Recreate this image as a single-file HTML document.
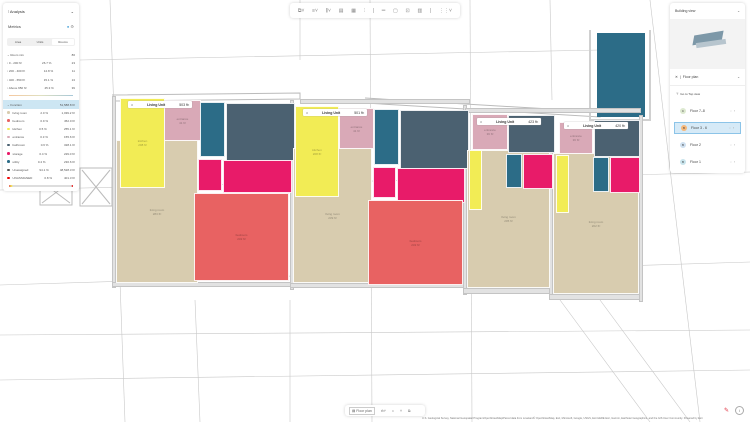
<!DOCTYPE html>
<html><head><meta charset="utf-8"><style>
*{margin:0;padding:0;box-sizing:border-box}
body{width:750px;height:422px;overflow:hidden;background:#fff;font-family:"Liberation Sans",sans-serif;position:relative;color:#333}
.a{position:absolute}
.r{position:absolute;font-size:3px;color:rgba(0,0,0,.35);display:flex;flex-direction:column;align-items:center;justify-content:center;text-align:center;border:0.7px solid rgba(255,255,255,.9)}
.y{background:#f2ec55}.p{background:#d9a9b7}.b{background:#d8ccaf}.t{background:#2c6c87}.s{background:#4b6171}.m{background:#e81b69}.rd{background:#e86262}
.w{position:absolute;background:#e2e2e2;border:0.5px solid #c4c4c4}
.lab{position:absolute;background:#fff;font-size:3.5px;height:7px;display:flex;align-items:center;padding:0 3px;gap:14px;border-radius:1px;box-shadow:0 0 1px #999}
.panel{position:absolute;background:#fff;border-radius:3px;box-shadow:0 0 3px rgba(0,0,0,.18)}
.row{display:flex;justify-content:space-between;font-size:3px;color:#555;height:8.2px;align-items:center;padding:0 4px}
.dot{display:inline-block;width:2.5px;height:2.5px;border-radius:50%;margin-right:3px}
.fl{display:flex;align-items:center;font-size:3.5px;height:12px;padding:0 6px;color:#444;margin:0 4px}
.c{display:inline-block;width:6px;height:6px;border-radius:50%;margin-right:4px;font-size:3px;text-align:center;line-height:6px}
</style></head><body>
<svg class="a" style="left:0;top:0" width="750" height="422">
<g stroke="#c8c8c8" stroke-width="0.6" fill="none">
<line x1="0" y1="190" x2="750" y2="172"/><line x1="0" y1="285" x2="750" y2="262"/>
<line x1="110" y1="0" x2="125" y2="422"/><line x1="370" y1="0" x2="372" y2="422"/><line x1="470" y1="0" x2="472" y2="422"/>
<line x1="300" y1="0" x2="300" y2="60"/><line x1="550" y1="0" x2="552" y2="100"/><line x1="650" y1="0" x2="700" y2="422"/>
<line x1="0" y1="335" x2="750" y2="330"/><line x1="560" y1="300" x2="650" y2="422"/><line x1="600" y1="300" x2="690" y2="422"/>
<line x1="80" y1="60" x2="600" y2="50"/><line x1="195" y1="300" x2="200" y2="422"/><line x1="290" y1="300" x2="290" y2="422"/>
<line x1="0" y1="380" x2="750" y2="370"/>
</g>
<g stroke="#bbb" stroke-width="1" fill="none">
<rect x="80" y="168" width="32" height="38"/><line x1="82" y1="170" x2="110" y2="204"/><line x1="110" y1="170" x2="82" y2="204"/>
<rect x="40" y="180" width="32" height="25"/><line x1="42" y1="182" x2="70" y2="203"/><line x1="70" y1="182" x2="42" y2="203"/>
<polyline points="112,95 300,93 300,99 112,101"/><polyline points="365,98 600,112 600,117 365,103"/>
</g>
<polygon points="597,33 645,33 645,117 597,117" fill="#2c6c87"/>
<polyline points="590,30 590,120 650,120 650,30" stroke="#d0d0d0" stroke-width="2" fill="none"/>
</svg>
<div class="w" style="left:112px;top:96px;width:4px;height:192px"></div>
<div class="w" style="left:112px;top:282px;width:180px;height:5px"></div>
<div class="w" style="left:290px;top:100px;width:4px;height:190px"></div>
<div class="w" style="left:290px;top:283px;width:176px;height:5px"></div>
<div class="w" style="left:463px;top:105px;width:4px;height:190px"></div>
<div class="w" style="left:463px;top:288px;width:90px;height:6px"></div>
<div class="w" style="left:549px;top:115px;width:4px;height:182px"></div>
<div class="w" style="left:549px;top:294px;width:93px;height:6px"></div>
<div class="w" style="left:639px;top:115px;width:4px;height:187px"></div>
<div class="w" style="left:300px;top:99px;width:170px;height:5px"></div>
<div class="w" style="left:465px;top:108px;width:176px;height:5px"></div>

<div class="r b" style="left:116px;top:140px;width:82px;height:143px">living room<br>283 ft²</div>
<div class="r y" style="left:120px;top:98px;width:45px;height:90px">kitchen<br>208 ft²</div>
<div class="r p" style="left:164px;top:100px;width:37px;height:41px">entrance<br>41 ft²</div>
<div class="r t" style="left:200px;top:102px;width:25px;height:55px"></div>
<div class="r s" style="left:226px;top:103px;width:69px;height:58px"></div>
<div class="r m" style="left:198px;top:159px;width:24px;height:32px"></div>
<div class="r m" style="left:223px;top:160px;width:69px;height:33px"></div>
<div class="r rd" style="left:194px;top:193px;width:95px;height:88px">bedroom<br>232 ft²</div>

<div class="r b" style="left:293px;top:148px;width:79px;height:135px">living room<br>239 ft²</div>
<div class="r y" style="left:295px;top:106px;width:44px;height:91px">kitchen<br>208 ft²</div>
<div class="r p" style="left:339px;top:108px;width:35px;height:41px">entrance<br>41 ft²</div>
<div class="r t" style="left:374px;top:109px;width:25px;height:56px"></div>
<div class="r s" style="left:400px;top:110px;width:69px;height:59px"></div>
<div class="r m" style="left:373px;top:167px;width:23px;height:31px"></div>
<div class="r m" style="left:397px;top:168px;width:68px;height:35px"></div>
<div class="r rd" style="left:368px;top:200px;width:95px;height:85px">bedroom<br>232 ft²</div>

<div class="r b" style="left:467px;top:150px;width:83px;height:138px">living room<br>205 ft²</div>
<div class="r y" style="left:469px;top:150px;width:13px;height:60px"></div>
<div class="r p" style="left:472px;top:114px;width:36px;height:36px">entrance<br>36 ft²</div>
<div class="r s" style="left:508px;top:115px;width:47px;height:38px"></div>
<div class="r t" style="left:506px;top:154px;width:16px;height:34px"></div>
<div class="r m" style="left:523px;top:154px;width:30px;height:35px"></div>

<div class="r b" style="left:553px;top:153px;width:86px;height:141px">living room<br>202 ft²</div>
<div class="r y" style="left:556px;top:155px;width:13px;height:58px"></div>
<div class="r p" style="left:559px;top:122px;width:34px;height:32px">entrance<br>36 ft²</div>
<div class="r s" style="left:594px;top:120px;width:46px;height:37px"></div>
<div class="r t" style="left:593px;top:157px;width:16px;height:35px"></div>
<div class="r m" style="left:610px;top:157px;width:30px;height:36px"></div>

<div class="lab" style="left:128px;top:101px">⌂ <b>Living Unit</b><span>503 ft²</span></div>
<div class="lab" style="left:303px;top:109px">⌂ <b>Living Unit</b><span>501 ft²</span></div>
<div class="lab" style="left:477px;top:118px">⌂ <b>Living Unit</b><span>423 ft²</span></div>
<div class="lab" style="left:564px;top:122px">⌂ <b>Living Unit</b><span>420 ft²</span></div>

<div class="panel" style="left:3px;top:3px;width:76px;height:188px">
<div style="font-size:4px;padding:6px 5px;display:flex;justify-content:space-between"><span>⫶ Analysis</span><span>⌄</span></div>
<div style="font-size:4px;padding:4px 5px;display:flex;justify-content:space-between;color:#444"><span>Metrics</span><span style="color:#4aa3d8">● <span style="color:#888">⚙</span></span></div>
<div style="margin:5px 4px;height:8px;background:#f0f0f0;border-radius:2px;display:flex;font-size:3px;align-items:center;color:#555"><span style="flex:1;text-align:center">Area</span><span style="flex:1;text-align:center">Units</span><span style="flex:1;text-align:center;background:#fff;margin:1px;border-radius:1px;line-height:6px">Rooms</span></div>
<div class="row"><span>⌄ Room mix</span><span>86</span></div>
<div class="row"><span>▫ 0 - 200 ft²</span><span>26.7 %</span><span>23</span></div>
<div class="row"><span>▫ 200 - 400 ft²</span><span>12.8 %</span><span>11</span></div>
<div class="row"><span>▫ 400 - 650 ft²</span><span>15.1 %</span><span>13</span></div>
<div class="row"><span>▫ Above 650 ft²</span><span>45.3 %</span><span>39</span></div>
<div style="height:1.5px;margin:3px 6px;background:linear-gradient(90deg,#f5c8a0,#e0e0c0,#a8c8d8)"></div>
<div class="row" style="background:#cde6f3;margin-top:4px"><span>⌄ Function</span><span>51,588.8 ft²</span></div>
<div class="row"><span><i class="dot" style="background:#d8ccaf"></i>living room</span><span>2.0 %</span><span>1,039.2 ft²</span></div>
<div class="row"><span><i class="dot" style="background:#e86262"></i>bedroom</span><span>0.9 %</span><span>452.0 ft²</span></div>
<div class="row"><span><i class="dot" style="background:#f2ec55"></i>kitchen</span><span>0.5 %</span><span>255.1 ft²</span></div>
<div class="row"><span><i class="dot" style="background:#d9a9b7"></i>entrance</span><span>0.3 %</span><span>155.6 ft²</span></div>
<div class="row"><span><i class="dot" style="background:#4b6171"></i>bathroom</span><span>0.6 %</span><span>328.1 ft²</span></div>
<div class="row"><span><i class="dot" style="background:#e81b69"></i>storage</span><span>0.4 %</span><span>229.0 ft²</span></div>
<div class="row"><span><i class="dot" style="background:#2c6c87"></i>utility</span><span>0.4 %</span><span>230.6 ft²</span></div>
<div class="row"><span><i class="dot" style="background:#555"></i>Unassigned</span><span>94.1 %</span><span>48,528.3 ft²</span></div>
<div class="row"><span><i class="dot" style="background:#e00"></i>UNASSIGNED</span><span>0.8 %</span><span>401.3 ft²</span></div>
<div style="height:1.5px;margin:3px 6px;background:linear-gradient(90deg,#e86262 0,#f2ec55 4%,#ddd 6%,#ddd 97%,#e00 100%)"></div>
</div>

<div class="panel" style="left:290px;top:3px;width:170px;height:15px;font-size:5px;color:#888;display:flex;align-items:center;justify-content:space-around;padding:0 4px">
<span>⧉˅</span><span>≡˅</span><span>⫼˅</span><span>▤</span><span>▦</span><span>⫶</span><span>|</span><span>═</span><span>▢</span><span>⊡</span><span>▥</span><span>|</span><span>⋮⋮˅</span></div>

<div class="panel" style="left:670px;top:3px;width:75px;height:170px">
<div style="font-size:3.5px;padding:6px 5px;display:flex;justify-content:space-between;color:#444"><span>Building view</span><span>⌄</span></div>
<div style="height:50px;background:#f3f3f3;position:relative">
<div class="a" style="left:24px;top:14px;width:28px;height:10px;background:#7d98a8;transform:skewX(-20deg) rotate(-10deg)"></div>
<div class="a" style="left:26px;top:22px;width:30px;height:5px;background:#b7c5ce;transform:rotate(-8deg)"></div>
</div>
<div style="font-size:3.5px;padding:6px 5px;display:flex;justify-content:space-between;color:#444;border-bottom:1px solid #eee"><span>✕ &nbsp;|&nbsp; Floor plan</span><span>⌄</span></div>
<div style="font-size:3px;padding:6px 6px;color:#444">⊤ &nbsp;Go to Top view</div>
<div class="fl" style="margin-top:3px"><span class="c" style="background:#dde9d0">C</span>Floor 7–8<span style="margin-left:auto;color:#999">◌ &nbsp;›</span></div>
<div class="fl" style="margin-top:5px;background:#d6eaf7;border:0.7px solid #8cc4e8"><span class="c" style="background:#f6b87a">B</span>Floor 3 - 6<span style="margin-left:auto;color:#999">◌ &nbsp;›</span></div>
<div class="fl" style="margin-top:5px"><span class="c" style="background:#cfe0f0">B</span>Floor 2<span style="margin-left:auto;color:#999">◌ &nbsp;›</span></div>
<div class="fl" style="margin-top:5px"><span class="c" style="background:#c8e4ec">B</span>Floor 1<span style="margin-left:auto;color:#999">◌ &nbsp;›</span></div>
</div>

<div class="panel" style="left:345px;top:405px;width:80px;height:11px;font-size:3.5px;color:#666;display:flex;align-items:center;gap:6px;padding:0 4px"><span style="border:0.6px solid #ccc;padding:1px 2px">▤ Floor plan</span><span>⊖˅</span><span>⌂</span><span>˅</span><span>⧉</span></div>
<div class="a" style="left:724px;top:407px;font-size:6px;color:#e03040">✎</div>
<div class="a" style="left:735px;top:406px;width:9px;height:9px;border-radius:50%;border:0.6px solid #aaa;font-size:4px;text-align:center;line-height:8px;color:#777">i</div>
<div class="a" style="left:422px;top:417px;font-size:2.6px;color:#777;white-space:nowrap">U.S. Geological Survey, National Geospatial Program/OpenStreetMap/Parcel data from Loveland© OpenStreetMap, Esri, Microsoft, Google, USGS, Esri HERE Esri, Garmin, Earthstar Geographics, and the GIS User Community. Powered by Esri</div>
</body></html>
